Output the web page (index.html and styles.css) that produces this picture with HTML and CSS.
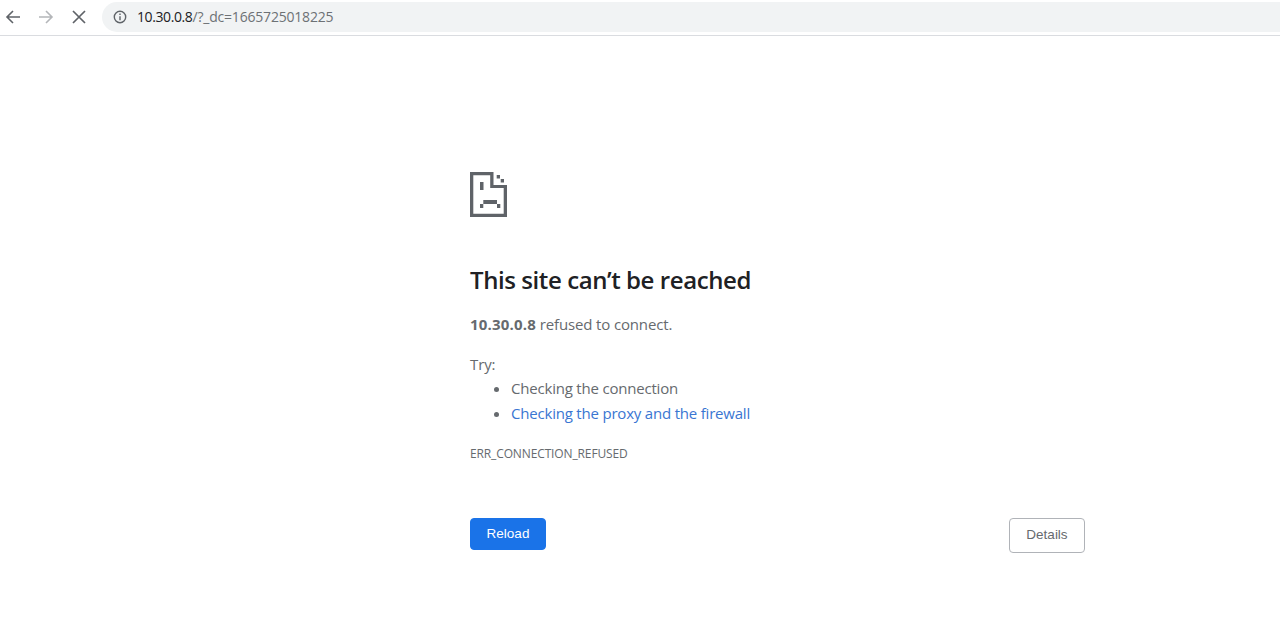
FILE: index.html

```html
<!DOCTYPE html>
<html lang="en">
<head>
  <meta charset="UTF-8">
  <title>10.30.0.8</title>
  <link rel="stylesheet" href="styles.css">
</head>
<body>
  <div class="toolbar">
    <svg class="nav-icon" width="16" height="16" viewBox="0 0 16 16"><path d="M15 8H2M8 2 2 8l6 6" fill="none" stroke="#5f6368" stroke-width="1.6"/></svg>
    <svg class="nav-icon forward" width="16" height="16" viewBox="0 0 16 16"><path d="M1 8h13M8 2l6 6-6 6" fill="none" stroke="#b4b6b9" stroke-width="1.6"/></svg>
    <svg class="nav-icon stop" width="14" height="14" viewBox="0 0 14 14"><path d="M1 1l12 12M13 1 1 13" fill="none" stroke="#5f6368" stroke-width="1.7"/></svg>
    <div class="omnibox">
      <svg width="14" height="14" viewBox="0 0 14 14"><circle cx="7" cy="7" r="5.7" fill="none" stroke="#5f6368" stroke-width="1.4"/><path d="M7 6.2v4M7 3.6v1.5" stroke="#5f6368" stroke-width="1.4"/></svg>
      <span class="url"><span class="host">10.30.0.8</span>/?_dc=1665725018225</span>
    </div>
  </div>

  <div class="main">
    <svg class="sad-icon" width="37" height="45" viewBox="0 0 37 45">
      <path d="M0 0h23.5v13h13.5v32H0zM3.3 3.3v38.4h30.4V16H20.2V3.3z" fill="#5f6368" fill-rule="evenodd"/>
      <path d="M26.7 3H30v3.5h-3.3zM30.7 7H34v3.5h-3.3zM10 10h3.5v8H10zM10 32h3.3v4H10zM13.3 28h13.7v4H13.3zM27 32h3.3v4H27z" fill="#5f6368"/>
    </svg>
    <h1>This site can’t be reached</h1>
    <p class="summary"><strong>10.30.0.8</strong> refused to connect.</p>
    <p class="try">Try:</p>
    <ul>
      <li>Checking the connection</li>
      <li><a href="#">Checking the proxy and the firewall</a></li>
    </ul>
    <div class="code">ERR_CONNECTION_REFUSED</div>
    <div class="buttons">
      <button class="reload">Reload</button>
      <button class="details">Details</button>
    </div>
  </div>
</body>
</html>
```

FILE: styles.css

```css
body { margin: 0; background: #fff; font-family: "Open Sans", "Noto Sans", sans-serif; color: #666a6e; }

.toolbar { display: flex; align-items: center; height: 33px; padding-bottom: 2px; border-bottom: 1px solid #dadce0; box-sizing: content-box; }
.nav-icon { flex: none; margin-left: 5px; }
.forward { margin-left: 17px; }
.stop { margin-left: 18px; }
.omnibox { display: flex; align-items: center; gap: 10px; flex: 1; height: 30px; margin-left: 16px; padding-left: 11px; background: #f1f3f4; border-radius: 15px 0 0 15px; }
.url { font-size: 14px; color: #6d7175; letter-spacing: -0.2px; }
.host { color: #202124; letter-spacing: -0.4px; }

.main { width: 615px; margin-left: 470px; padding-top: 136px; }
.sad-icon { display: block; }
h1 { margin: 47px 0 0; font-size: 24px; line-height: 32px; font-weight: 600; color: #202124; letter-spacing: -0.42px; }
.summary { margin: 17px 0 0; font-size: 15px; line-height: 22px; letter-spacing: -0.15px; }
.summary strong { letter-spacing: 0.2px; }
.try { margin: 18px 0 0; font-size: 15px; line-height: 22px; letter-spacing: -0.12px; }
ul { margin: 1px 0 0; padding-left: 41px; font-size: 15px; line-height: 25px; letter-spacing: -0.2px; }
a { color: #3a76d2; text-decoration: none; }
.code { margin-top: 20px; font-size: 12px; line-height: 16px; letter-spacing: -0.13px; }

.buttons { display: flex; justify-content: space-between; align-items: flex-start; margin-top: 56px; }
button { font-family: "Liberation Sans", Arial, sans-serif; font-size: 13.5px; border-radius: 4px; padding: 0 0 2px; }
.reload { width: 76px; height: 32px; color: #fff; background: #1a73e8; border: 1px solid #1a73e8; }
.details { width: 76px; height: 35px; color: #666a6e; background: #fff; border: 1px solid #b0b3b8; }
```
